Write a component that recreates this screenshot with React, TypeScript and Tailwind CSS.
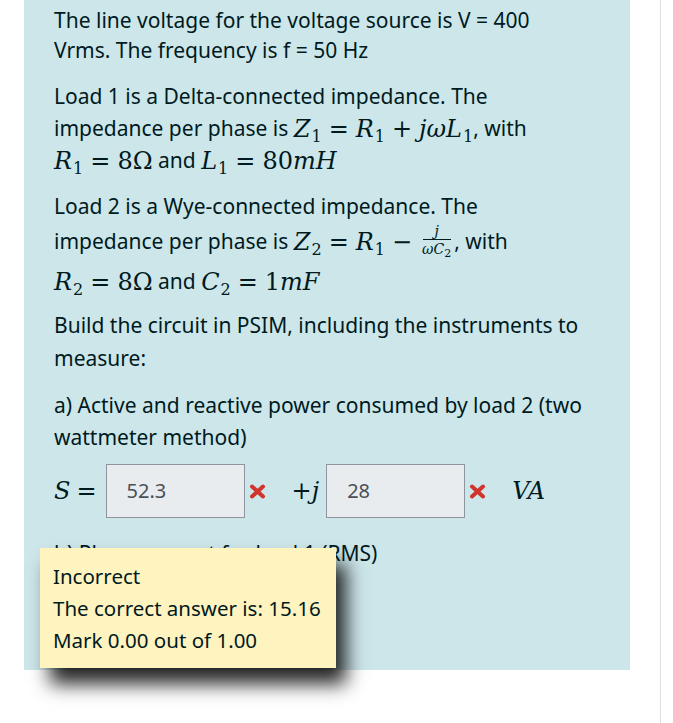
import React from "react";

const txt = "font-['Segoe_UI','Noto_Sans',sans-serif]";
const mathCls = "font-['DejaVu_Serif','Liberation_Serif',serif] text-[24px] leading-none";

function I({ children }: { children: React.ReactNode }) {
  return <span className="italic">{children}</span>;
}

function Sub({ children }: { children: React.ReactNode }) {
  return <span className="relative top-[5px] ml-[1px] text-[16px] not-italic">{children}</span>;
}

function Op({ children }: { children: React.ReactNode }) {
  return <span className="mx-[7px] not-italic">{children}</span>;
}

function M({ children }: { children: React.ReactNode }) {
  return <span className={mathCls}>{children}</span>;
}

function WrongIcon() {
  return (
    <svg className="mx-[4px] h-[15px] w-[17px] shrink-0" viewBox="0 0 17 15">
      <path d="M3 2.5 L14 12.5 M14 2.5 L3 12.5" stroke="#d0342c" strokeWidth="4" strokeLinecap="round" />
    </svg>
  );
}

function AnswerBox({ value }: { value: string }) {
  return (
    <div className="flex h-[54px] w-[139px] items-center border border-[#8f959e] bg-[#e9ecef] px-[20px] text-[20px] text-[#495057]">
      {value}
    </div>
  );
}

export default function App() {
  return (
    <div className={`relative h-[723px] w-[673px] overflow-hidden bg-white ${txt}`}>
      <div className="h-[723px] w-[661px] border-r border-[#dee2e6] pl-[24px] pr-[30px]">
        <div className="h-[670px] bg-[#cde6ea] px-[30px] pt-[5px] text-[21px] text-[#001a1e]">
          <div className="leading-[30px]">
            <div>The line voltage for the voltage source is V = 400</div>
            <div>Vrms. The frequency is f = 50 Hz</div>
          </div>

          <div className="mt-[16px]">
            <div className="leading-[30px]">Load 1 is a Delta-connected impedance. The</div>
            <div className="flex h-[36px] items-center whitespace-nowrap">
              <span>impedance per phase is&nbsp;</span>
              <M>
                <I>Z</I>
                <Sub>1</Sub>
                <Op>=</Op>
                <I>R</I>
                <Sub>1</Sub>
                <Op>+</Op>
                <I>jωL</I>
                <Sub>1</Sub>
              </M>
              <span>, with</span>
            </div>
            <div className="flex h-[28px] items-center whitespace-nowrap">
              <M>
                <I>R</I>
                <Sub>1</Sub>
                <Op>=</Op>8Ω
              </M>
              <span>&nbsp;and&nbsp;</span>
              <M>
                <I>L</I>
                <Sub>1</Sub>
                <Op>=</Op>80<I>mH</I>
              </M>
            </div>
          </div>

          <div className="mt-[16px]">
            <div className="leading-[30px]">Load 2 is a Wye-connected impedance. The</div>
            <div className="flex h-[42px] items-center whitespace-nowrap">
              <span>impedance per phase is&nbsp;</span>
              <M>
                <I>Z</I>
                <Sub>2</Sub>
                <Op>=</Op>
                <I>R</I>
                <Sub>1</Sub>
                <Op>−</Op>
              </M>
              <span className="mx-[3px] inline-flex flex-col items-center font-['DejaVu_Serif',serif]">
                <span className="text-[14px] italic leading-[15px]">j</span>
                <span className="h-px w-[28px] bg-[#001a1e]" />
                <span className="text-[14px] italic leading-[18px]">
                  ωC<span className="relative top-[3px] text-[11px] not-italic">2</span>
                </span>
              </span>
              <span>, with</span>
            </div>
            <div className="flex h-[38px] items-center whitespace-nowrap">
              <M>
                <I>R</I>
                <Sub>2</Sub>
                <Op>=</Op>8Ω
              </M>
              <span>&nbsp;and&nbsp;</span>
              <M>
                <I>C</I>
                <Sub>2</Sub>
                <Op>=</Op>1<I>mF</I>
              </M>
            </div>
          </div>

          <div className="mt-[8px] leading-[33px]">
            <div>Build the circuit in PSIM, including the instruments to</div>
            <div>measure:</div>
          </div>

          <div className="mt-[14px] leading-[32px]">
            <div>a) Active and reactive power consumed by load 2 (two</div>
            <div>wattmeter method)</div>
          </div>

          <div className="mt-[11px] flex h-[54px] items-center">
            <span className={`${mathCls} italic`}>S</span>
            <span className={`${mathCls} ml-[6px] mr-[9px]`}>=</span>
            <AnswerBox value="52.3" />
            <WrongIcon />
            <span className={`${mathCls} ml-[22px] mr-[7px]`}>
              +<I>j</I>
            </span>
            <AnswerBox value="28" />
            <WrongIcon />
            <span className={`${mathCls} ml-[22px] italic`}>VA</span>
          </div>

          <div className="mt-[20px] leading-[30px]">b) Phase current for load 1 (RMS)</div>
        </div>
      </div>
      <div className="absolute left-[40px] top-[548px] w-[296px] whitespace-nowrap bg-[#fff3bf] px-[13px] py-[12px] text-[20.5px] leading-[32px] text-[#001a1e] shadow-[10px_16px_18px_rgba(0,0,0,0.85)]">
        <div>Incorrect</div>
        <div>The correct answer is: 15.16</div>
        <div>Mark 0.00 out of 1.00</div>
      </div>
    </div>
  );
}
